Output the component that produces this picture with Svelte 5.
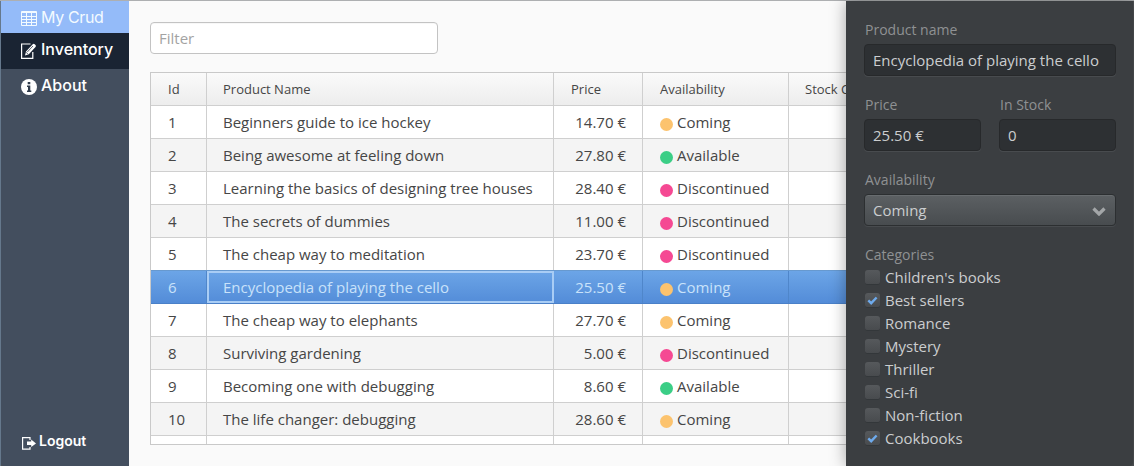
<script>
  const rows = [
    [1, 'Beginners guide to ice hockey', '14.70 €', 'Coming'],
    [2, 'Being awesome at feeling down', '27.80 €', 'Available'],
    [3, 'Learning the basics of designing tree houses', '28.40 €', 'Discontinued'],
    [4, 'The secrets of dummies', '11.00 €', 'Discontinued'],
    [5, 'The cheap way to meditation', '23.70 €', 'Discontinued'],
    [6, 'Encyclopedia of playing the cello', '25.50 €', 'Coming'],
    [7, 'The cheap way to elephants', '27.70 €', 'Coming'],
    [8, 'Surviving gardening', '5.00 €', 'Discontinued'],
    [9, 'Becoming one with debugging', '8.60 €', 'Available'],
    [10, 'The life changer: debugging', '28.60 €', 'Coming']
  ];
  const selected = 6;
  const categories = [
    ["Children's books", false],
    ['Best sellers', true],
    ['Romance', false],
    ['Mystery', false],
    ['Thriller', false],
    ['Sci-fi', false],
    ['Non-fiction', false],
    ['Cookbooks', true]
  ];
</script>

<div class="app">
  <nav>
    <div class="item brand">
      <svg width="16" height="15" viewBox="0 0 16 15" fill="none" stroke="currentColor"><path d="M.5 .5h15v14H.5zM0 1.500h16" /><path d="M0 5.500h16M0 8.500h16M0 11.500h16M5.500 2v12M10.500 2v12" /></svg>
      <span>My Crud</span>
    </div>
    <div class="item active">
      <svg width="16" height="16" viewBox="0 0 16 16"><path d="M9.500 1H.6v14.300h11.200V9" fill="none" stroke="currentColor" stroke-width="1.200" /><path d="M4 12.500l1-4L11.700 1.200q1-.8 2 .1l.8.8q.9 1 0 1.900L7.800 11.200z" fill="currentColor" /><path d="M6.300 9l5.700-6M5 9.200l2 2" stroke="#1a2433" stroke-width=".7" /></svg>
      <span>Inventory</span>
    </div>
    <div class="item">
      <svg width="16" height="16" viewBox="0 0 16 16"><circle cx="8" cy="8" r="8" fill="currentColor" /><path d="M6.700 3h2.600v2.200H6.700zM6 6.500h3.300v5h1V13H6v-1.500h1V8H6z" fill="#303c4c" /></svg>
      <span>About</span>
    </div>
    <div class="logout">
      <svg width="14" height="13" viewBox="0 0 14 13"><path d="M8 3V.6H.6v11.600H8V10" fill="none" stroke="currentColor" stroke-width="1.200" /><path d="M5 4.600h4.200V2.500L14 6.400 9.200 10V8H5z" fill="currentColor" /></svg>
      <span>Logout</span>
    </div>
  </nav>

  <main>
    <div class="filter">Filter</div>
    <div class="grid">
      <div class="row head">
        <div class="cell">Id</div>
        <div class="cell">Product Name</div>
        <div class="cell">Price</div>
        <div class="cell">Availability</div>
        <div class="cell">Stock Count</div>
      </div>
      {#each rows as [id, name, price, status]}
        <div class="row" class:alt={id % 2 === 0} class:selected={id === selected}>
          <div class="cell">{id}</div>
          <div class="cell" class:focus={id === selected}>{name}</div>
          <div class="cell price">{price}</div>
          <div class="cell"><i class="dot {status.toLowerCase()}"></i>{status}</div>
          <div class="cell"></div>
        </div>
      {/each}
      <div class="row rest">
        <div class="cell"></div><div class="cell"></div><div class="cell"></div><div class="cell"></div><div class="cell"></div>
      </div>
    </div>
  </main>

  <aside>
    <div class="label">Product name</div>
    <div class="input">Encyclopedia of playing the cello</div>
    <div class="pair">
      <div>
        <div class="label">Price</div>
        <div class="input">25.50 €</div>
      </div>
      <div>
        <div class="label">In Stock</div>
        <div class="input">0</div>
      </div>
    </div>
    <div class="label third">Availability</div>
    <div class="select">
      <span>Coming</span>
      <svg width="14" height="9" viewBox="0 0 14 9"><path d="M1.500 1.500L7 7l5.500-5.500" fill="none" stroke="#a3a6a8" stroke-width="3.200" /></svg>
    </div>
    <div class="label fourth">Categories</div>
    {#each categories as [name, on]}
      <div class="option">
        <span class="box">
          {#if on}
            <svg width="11" height="9" viewBox="0 0 11 9"><path d="M1.300 4.300L4.200 7.200L9.600 1.500" fill="none" stroke="#6eaaec" stroke-width="2.400" /></svg>
          {/if}
        </span>
        <span>{name}</span>
      </div>
    {/each}
  </aside>
</div>

<style>
  .app {
    box-sizing: border-box;
    width: 1134px;
    height: 466px;
    display: grid;
    grid-template-columns: 128px 717px 287px;
    padding: 1px 1px 0;
    background: linear-gradient(#adafb1 1px, transparent 1px), linear-gradient(90deg, #65788c 1px, #505356 1px);
    overflow: hidden;
    font: 15px/20px "Open Sans", sans-serif;
    color: #464646;
  }
  .app * { box-sizing: border-box; }
  nav {
    display: flex;
    flex-direction: column;
    background: #434e5e;
    color: #fff;
    font: 500 16px/20px Inter, sans-serif;
    border-bottom-left-radius: 3px;
  }
  .item {
    display: flex;
    align-items: center;
    gap: 4px;
    height: 32px;
    padding-left: 20px;
  }
  .item svg { position: relative; top: 1px; }
  .item + .item { height: 36px; padding-bottom: 4px; }
  .item + .item svg { top: 2px; }
  .brand { background: #94bbf9; color: #f2faff; font-weight: 400; letter-spacing: -.35px; }
  .active { background: #1a2433; }
  .logout {
    display: flex;
    align-items: center;
    gap: 4px;
    margin-top: auto;
    padding: 0 0 15px 21px;
    font-size: 14px;
    font-weight: 600;
  }
  .logout span { margin-left: -1px; }
  .logout svg { position: relative; top: 2px; }
  main {
    background: #fafafa;
    padding: 21px 0 0 21px;
    overflow: hidden;
  }
  .filter {
    width: 288px;
    height: 32px;
    padding: 5px 8px;
    border: 1px solid #c3c3c3;
    border-radius: 4px;
    background: #fff;
    color: #a3a3a3;
    box-shadow: inset 0 1px 0 #f7f7f7;
  }
  .grid {
    width: 760px;
    height: 373px;
    margin-top: 18px;
    border: 1px solid #c9c9c9;
    background: #fff;
    overflow: hidden;
  }
  .row {
    display: grid;
    grid-template-columns: 56px 347px 89px 146px 1fr;
    height: 33px;
    border-bottom: 1px solid #cfcfcf;
    background: #fff;
  }
  .cell {
    padding: 6px 16px 0;
    border-right: 1px solid #cfcfcf;
    white-space: nowrap;
  }
  .cell:first-child { padding-left: 17px; }
  .head {
    font-size: 13px;
    background: linear-gradient(#fafafa, #ededed);
  }
  .head .cell:nth-child(3) { padding-left: 17px; }
  .row .cell:nth-child(4) { padding-left: 17px; }
  .alt { background: #f4f4f4; }
  .price { text-align: right; }
  .selected {
    height: 34px;
    margin-top: -1px;
    background: linear-gradient(#6ca5e7, #538cd8);
    border-top: 1px solid #6799cf;
    border-bottom-color: #4a80c8;
    color: #c9e2fa;
  }
  .selected .cell { border-right-color: #4f86ca; }
  .selected .focus {
    box-shadow: inset 0 0 0 2px #a9cdf5;
    border-right: 0;
  }
  .dot {
    display: inline-block;
    width: 13px;
    height: 13px;
    margin-right: 4px;
    border-radius: 50%;
    vertical-align: -3px;
  }
  .coming { background: #fcc36e; }
  .available { background: #3bce86; }
  .discontinued { background: #f54993; }
  aside {
    z-index: 1;
    padding: 19px 17px 0 18px;
    background: #3b3e41;
    color: #cbcdcf;
    box-shadow: 0 0 16px rgba(0, 0, 0, .35);
    border-bottom-right-radius: 4px;
  }
  .label {
    padding-left: 1px;
    font-size: 14px;
    color: #8f9193;
  }
  .input {
    height: 32px;
    margin-top: 4px;
    padding: 5px 8px;
    border: 1px solid #27292b;
    border-radius: 4px;
    background: #2d3033;
    box-shadow: 0 1px 0 #484b4e;
    white-space: nowrap;
  }
  .pair {
    display: grid;
    grid-template-columns: 117px 117px;
    gap: 18px;
    margin-top: 19px;
  }
  .third { margin-top: 19px; }
  .select {
    display: flex;
    align-items: center;
    justify-content: space-between;
    height: 32px;
    margin-top: 4px;
    padding: 0 9px 0 8px;
    border: 1px solid #2c2f31;
    border-radius: 4px;
    background: linear-gradient(#5c6063, #484c4f);
    box-shadow: inset 0 1px 0 #686c6f, 0 1px 0 #484b4e;
  }
  .select svg { position: relative; top: 1px; }
  .fourth { margin-top: 19px; margin-bottom: 1px; }
  .option {
    display: flex;
    gap: 5px;
    height: 23px;
    padding: 1px 0 0 1px;
  }
  .box {
    display: flex;
    align-items: center;
    justify-content: center;
    width: 15px;
    height: 15px;
    margin-top: 3px;
    border-radius: 3px;
    border-bottom: 1px solid #33373a;
    background: linear-gradient(#56595c, #484b4e);
  }
</style>
